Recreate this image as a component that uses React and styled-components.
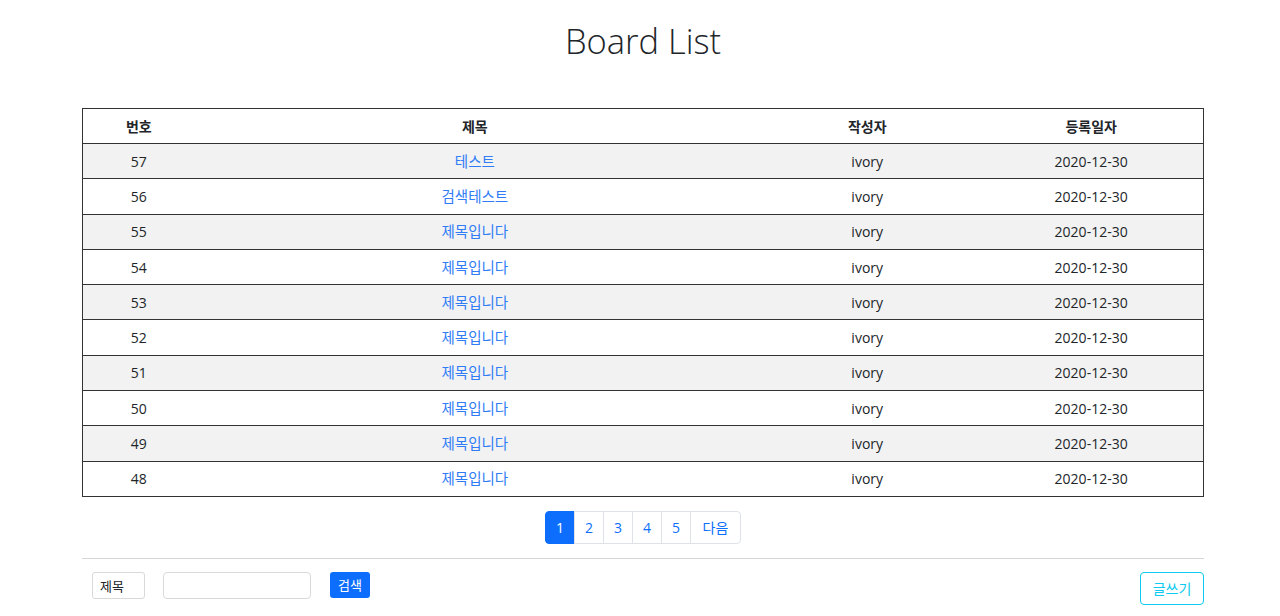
import styled, { createGlobalStyle } from "styled-components";
import React from "react";

const rows = [
  { no: 57, title: "테스트" },
  { no: 56, title: "검색테스트" },
  { no: 55, title: "제목입니다" },
  { no: 54, title: "제목입니다" },
  { no: 53, title: "제목입니다" },
  { no: 52, title: "제목입니다" },
  { no: 51, title: "제목입니다" },
  { no: 50, title: "제목입니다" },
  { no: 49, title: "제목입니다" },
  { no: 48, title: "제목입니다" },
];

const GlobalStyle = createGlobalStyle`
  body {
    margin: 0;
    background: #fff;
    color: #212529;
    font-family: "Open Sans", "Noto Sans CJK KR", sans-serif;
    font-size: 14px;
  }
`;

const App = () => {
  const [page, setPage] = React.useState(1);

  return (
    <>
      <GlobalStyle />
      <Container>
        <Title>Board List</Title>

        <Table>
          <colgroup>
            <col style={{ width: "10%" }} />
            <col style={{ width: "50%" }} />
            <col style={{ width: "20%" }} />
            <col style={{ width: "20%" }} />
          </colgroup>
          <thead>
            <tr>
              <Th>번호</Th>
              <Th>제목</Th>
              <Th>작성자</Th>
              <Th>등록일자</Th>
            </tr>
          </thead>
          <tbody>
            {rows.map((r, i) => (
              <Row key={r.no} striped={i % 2 === 0}>
                <Td>{r.no}</Td>
                <Td>
                  <TitleLink href="#">{r.title}</TitleLink>
                </Td>
                <Td>ivory</Td>
                <Td>2020-12-30</Td>
              </Row>
            ))}
          </tbody>
        </Table>

        <Pagination>
          {[1, 2, 3, 4, 5].map((n) => (
            <PageItem key={n} active={page === n} onClick={() => setPage(n)}>
              {n}
            </PageItem>
          ))}
          <PageItem wide>다음</PageItem>
        </Pagination>

        <Divider />

        <SearchBar>
          <Select defaultValue="title">
            <option value="title">제목</option>
          </Select>
          <Input type="text" />
          <SearchButton>검색</SearchButton>
          <WriteButton>글쓰기</WriteButton>
        </SearchBar>
      </Container>
    </>
  );
};

const Container = styled.div`
  width: 1122px;
  margin: 0 0 0 82px;
`;

const Title = styled.h1`
  margin: 0;
  padding: 18px 0 0;
  height: 108px;
  box-sizing: border-box;
  text-align: center;
  font-family: "Open Sans", sans-serif;
  font-weight: 300;
  font-size: 34.5px;
  line-height: 46px;
  color: #212529;
`;

const Table = styled.table`
  width: 1122px;
  border-collapse: collapse;
  border: 1px solid #333;
  table-layout: fixed;
`;

const Th = styled.th`
  height: 34px;
  padding: 0;
  text-align: center;
  font-weight: 700;
  font-size: 14px;
  font-family: "Open Sans", "Noto Sans CJK KR", sans-serif;
  border-bottom: 1px solid #333;
`;

const Row = styled.tr`
  background: ${(p) => (p.striped ? "#f2f2f2" : "#fff")};
  border-bottom: 1px solid #333;
`;

const Td = styled.td`
  height: 34.3px;
  padding: 0;
  text-align: center;
  font-size: 14px;
  color: #212529;
`;

const TitleLink = styled.a`
  color: #2f7cf6;
  text-decoration: none;
  font-size: 14.5px;
  position: relative;
  top: -1px;
`;

const Pagination = styled.div`
  display: flex;
  justify-content: center;
  margin: 14px 0 0;
`;

const PageItem = styled.span`
  display: flex;
  align-items: center;
  justify-content: center;
  box-sizing: border-box;
  width: ${(p) => (p.wide ? "51px" : "30px")};
  height: 33px;
  font-size: 14px;
  color: ${(p) => (p.active ? "#fff" : "#0d6efd")};
  background: ${(p) => (p.active ? "#0d6efd" : "#fff")};
  border: 1px solid ${(p) => (p.active ? "#0d6efd" : "#dee2e6")};
  margin-left: -1px;
  cursor: pointer;

  &:first-child {
    margin-left: 0;
    border-radius: 4px 0 0 4px;
  }

  &:last-child {
    border-radius: 0 4px 4px 0;
  }
`;

const Divider = styled.hr`
  margin: 14px 0 0;
  border: 0;
  border-top: 1px solid #d6d6d6;
`;

const SearchBar = styled.div`
  display: flex;
  align-items: flex-start;
  padding: 13px 0 0 10px;
`;

const Select = styled.select`
  width: 53px;
  height: 27px;
  font-size: 13px;
  padding: 0 7px;
  border: 1px solid #d9d9d9;
  border-radius: 3px;
  background: #fff;
  color: #212529;
  appearance: none;
  font-family: "Noto Sans CJK KR", sans-serif;
`;

const Input = styled.input`
  margin-left: 18px;
  width: 148px;
  height: 27px;
  box-sizing: border-box;
  border: 1px solid #d9d9d9;
  border-radius: 4px;
`;

const SearchButton = styled.button`
  margin-left: 19px;
  width: 40px;
  height: 26px;
  padding: 0;
  border: 0;
  border-radius: 3px;
  background: #0d6efd;
  color: #fff;
  font-size: 13px;
  font-family: "Noto Sans CJK KR", sans-serif;
`;

const WriteButton = styled.button`
  margin-left: auto;
  width: 64px;
  height: 33px;
  padding: 0;
  border: 1px solid #0dcaf0;
  border-radius: 4px;
  background: #fff;
  color: #0dcaf0;
  font-size: 14px;
  font-family: "Noto Sans CJK KR", sans-serif;
`;

export default App;
